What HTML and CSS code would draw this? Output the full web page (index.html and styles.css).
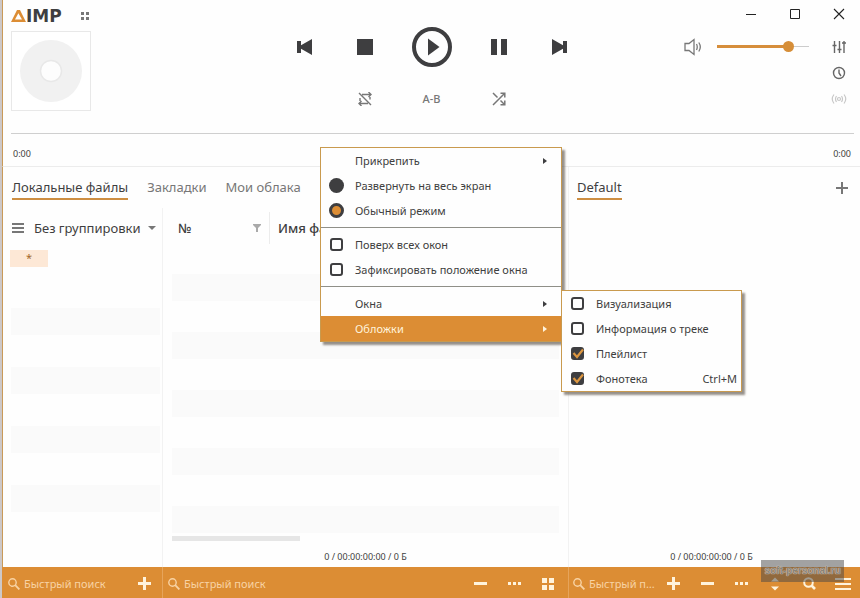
FILE: index.html
```html
<!DOCTYPE html>
<html lang="ru">
<head>
<meta charset="utf-8">
<title>AIMP</title>
<link rel="stylesheet" href="styles.css">
</head>
<body>
<div class="window">
  <header class="player">
    <div class="titlebar">
      <div class="logo">
        <svg width="15" height="12" viewBox="0 0 15 12" aria-hidden="true"><path fill="#dc8d34" fill-rule="evenodd" d="M6 0h3l6 12H0zM7.400 3.200 4 9.600h7z"/></svg>
        <span>IMP</span>
      </div>
      <button class="icon" aria-label="Меню">
        <svg width="8" height="8" viewBox="0 0 8 8" fill="#777"><path d="M0 0h3v3H0zM5 0h3v3H5zM0 5h3v3H0zM5 5h3v3H5z"/></svg>
      </button>
      <div class="window-buttons">
        <button class="icon" aria-label="Свернуть"><svg width="12" height="12"><path d="M1 6.500h10" stroke="#222"/></svg></button>
        <button class="icon" aria-label="Развернуть"><svg width="12" height="12"><path d="M1.500 1.500h9v9h-9z" fill="none" stroke="#222"/></svg></button>
        <button class="icon" aria-label="Закрыть"><svg width="12" height="12"><path d="m1 1 10 10M11 1 1 11" stroke="#222" stroke-width="1.100"/></svg></button>
      </div>
    </div>
    <div class="deck">
      <div class="cover">
        <svg width="62" height="62" viewBox="0 0 62 62"><circle cx="31" cy="31" r="31" fill="#f1f1f1"/><circle cx="31" cy="31" r="10.500" fill="#fdfdfd" stroke="#e8e8e8" stroke-width="1.500"/></svg>
      </div>
      <div class="transport">
        <button class="icon" aria-label="Назад"><svg width="16" height="16" fill="#3e3e40"><path d="M1 2h4v4.200L16 0v16L5 9.800V14H1z"/></svg></button>
        <button class="icon" aria-label="Стоп"><svg width="16" height="16" fill="#3e3e40"><path d="M0 0h16v16H0z"/></svg></button>
        <button class="icon" aria-label="Играть"><svg width="40" height="40"><circle cx="20" cy="20" r="18" fill="none" stroke="#3e3e40" stroke-width="4"/><path d="M16 11.500v17L27.500 20z" fill="#3e3e40"/></svg></button>
        <button class="icon" aria-label="Пауза"><svg width="16" height="16" fill="#3e3e40"><path d="M0 0h6v16H0zM10 0h6v16h-6z"/></svg></button>
        <button class="icon" aria-label="Вперёд"><svg width="16" height="16" fill="#3e3e40"><path d="M15 2h-4v4.200L0 0v16l11-6.200V14h4z"/></svg></button>
        <button class="icon second" aria-label="Повтор"><svg width="14" height="14" fill="none" stroke="#777" stroke-width="1.400"><path d="M4 2.500h9M10.500 0 13 2.500 10.500 5M12 5v2.500M10 11.500H1M3.500 9 1 11.500 3.500 14M2 9V6M1 1l12 12"/></svg></button>
        <button class="icon ab">A-B</button>
        <button class="icon" aria-label="Случайный порядок"><svg width="14" height="14" fill="none" stroke="#777" stroke-width="1.500"><path d="m1 1 4.500 4.500M8.500 8.500 12.500 12.500M1 13 12.500 1.500M8.500 1.200h4.300v4.300M8.500 12.800h4.300V8.500"/></svg></button>
      </div>
      <div class="side">
        <button class="icon speaker" aria-label="Звук"><svg width="18" height="18" fill="none" stroke="#777" stroke-width="1.300"><path d="M1 5.500h4L10 1.500v15L5 12.500H1zM12.500 6q1.500 3 0 6M14.800 4.500q3 4.500 0 9"/></svg></button>
        <input class="volume" type="range" min="0" max="100" value="81" aria-label="Громкость">
        <div class="side-icons">
          <button class="icon" aria-label="Эквалайзер"><svg width="14" height="14" fill="none" stroke="#666" stroke-width="1.400"><path d="M2.500 1v12M7.500 1v12M12 1v12M.5 5.500h4M5.500 9.500h4M10 3h4"/></svg></button>
          <button class="icon" aria-label="Планировщик"><svg width="14" height="14" fill="none" stroke="#666" stroke-width="1.400"><circle cx="7" cy="7" r="5.500"/><path d="M7 3.500V7l2 3"/></svg></button>
          <button class="icon" aria-label="Радио"><svg width="16" height="12" fill="none" stroke="#c8c8c8" stroke-width="1.200"><circle cx="8" cy="6" r="1.500"/><path d="M5.500 3q-2 3 0 6M10.500 3q2 3 0 6M3 1.500q-3.500 4.500 0 9M13 1.500q3.500 4.500 0 9"/></svg></button>
        </div>
      </div>
    </div>
    <input class="seek" type="range" min="0" max="100" value="0" aria-label="Позиция">
    <div class="times"><span>0:00</span><span>0:00</span></div>
  </header>

  <main class="content">
    <section class="library">
      <nav class="tabs">
        <a class="tab active" href="#local">Локальные файлы</a>
        <a class="tab" href="#bookmarks">Закладки</a>
        <a class="tab" href="#cloud">Мои облака</a>
      </nav>
      <div class="panes">
        <div class="groups">
          <button class="group-by">
            <svg width="12" height="11" fill="#777"><path d="M0 0h12v2H0zM0 4h12v2H0zM0 8h12v2H0z"/></svg>
            <span>Без группировки</span>
            <svg width="8" height="4" fill="#777"><path d="M0 0h8L4 4z"/></svg>
          </button>
          <div class="tag">*</div>
          <div class="stripes"><i></i><i></i><i></i><i></i></div>
        </div>
        <div class="files">
          <table class="grid">
            <thead>
              <tr><th class="num"><div>№ <svg width="8" height="8" fill="#aaa"><path d="M0 0h8v1L5 4v4H3V4L0 1z"/></svg></div></th><th class="name"><div>Имя файла</div></th></tr>
            </thead>
            <tbody>
              <tr><td colspan="2"></td></tr><tr><td colspan="2"></td></tr>
              <tr><td colspan="2"></td></tr><tr><td colspan="2"></td></tr>
              <tr><td colspan="2"></td></tr><tr><td colspan="2"></td></tr>
              <tr><td colspan="2"></td></tr><tr><td colspan="2"></td></tr>
              <tr><td colspan="2"></td></tr><tr><td colspan="2"></td></tr>
            </tbody>
          </table>
          <div class="scrollbar"></div>
          <p class="status">0 / 00:00:00:00 / 0 Б</p>
        </div>
      </div>
    </section>
    <section class="playlist">
      <div class="tabs">
        <a class="tab active" href="#default">Default</a>
        <button class="icon add" aria-label="Новый плейлист"><svg width="12" height="12"><path d="M6 0v12M0 6h12" stroke="#777" stroke-width="2"/></svg></button>
      </div>
      <p class="status">0 / 00:00:00:00 / 0 Б</p>
    </section>
  </main>

  <footer class="bar">
    <div class="bar-cell">
      <label class="search"><svg width="12" height="12" fill="none" stroke="#f8d3a4" stroke-width="1.400"><circle cx="4.500" cy="4.500" r="3.700"/><path d="m7.200 7.200 4.200 4.200" stroke-width="1.800"/></svg><input type="text" placeholder="Быстрый поиск" aria-label="Быстрый поиск"></label>
      <button class="icon" aria-label="Добавить"><svg width="13" height="13"><path d="M6.500 0v13M0 6.500h13" stroke="#fff3dc" stroke-width="3"/></svg></button>
    </div>
    <div class="bar-cell">
      <label class="search"><svg width="12" height="12" fill="none" stroke="#f8d3a4" stroke-width="1.400"><circle cx="4.500" cy="4.500" r="3.700"/><path d="m7.200 7.200 4.200 4.200" stroke-width="1.800"/></svg><input type="text" placeholder="Быстрый поиск" aria-label="Быстрый поиск"></label>
      <button class="icon" aria-label="Удалить"><svg width="13" height="13"><path d="M0 6.500h13" stroke="#fff3dc" stroke-width="3"/></svg></button>
      <button class="icon" aria-label="Ещё"><svg width="13" height="13" fill="#fff3dc"><path d="M0 5h3v3H0zM5 5h3v3H5zM10 5h3v3h-3z"/></svg></button>
      <button class="icon" aria-label="Вид"><svg width="12" height="12" fill="#fff3dc"><path d="M0 0h5v5H0zM7 0h5v5H7zM0 7h5v5H0zM7 7h5v5H7z"/></svg></button>
    </div>
    <div class="bar-cell">
      <label class="search"><svg width="12" height="12" fill="none" stroke="#f8d3a4" stroke-width="1.400"><circle cx="4.500" cy="4.500" r="3.700"/><path d="m7.200 7.200 4.200 4.200" stroke-width="1.800"/></svg><input type="text" placeholder="Быстрый поиск" aria-label="Быстрый поиск"></label>
      <button class="icon" aria-label="Добавить"><svg width="13" height="13"><path d="M6.500 0v13M0 6.500h13" stroke="#fff3dc" stroke-width="3"/></svg></button>
      <button class="icon" aria-label="Удалить"><svg width="13" height="13"><path d="M0 6.500h13" stroke="#fff3dc" stroke-width="3"/></svg></button>
      <button class="icon" aria-label="Ещё"><svg width="13" height="13" fill="#fff3dc"><path d="M0 5h3v3H0zM5 5h3v3H5zM10 5h3v3h-3z"/></svg></button>
      <button class="icon" aria-label="Сортировка"><svg width="8" height="14" fill="#fff3dc"><path d="M0 4.500h8L4 .5zM0 9.500h8l-4 4z"/></svg></button>
      <button class="icon" aria-label="Найти"><svg width="13" height="13" fill="none" stroke="#fff3dc" stroke-width="2"><circle cx="5.500" cy="5.500" r="4.300"/><path d="m8.500 8.500 3.500 3.500" stroke-width="2.600"/></svg></button>
      <button class="icon" aria-label="Список"><svg width="16" height="12" fill="#fff3dc"><path d="M0 0h16v2H0zM0 5h16v2H0zM0 10h16v2H0z"/></svg></button>
    </div>
  </footer>

  <div class="menu main-menu">
    <button class="item"><span>Прикрепить</span><svg width="4" height="6"><path d="M0 0v6l4-3z" fill="currentColor"/></svg></button>
    <label class="item"><input type="radio" name="mode"><span>Развернуть на весь экран</span></label>
    <label class="item"><input type="radio" name="mode" checked><span>Обычный режим</span></label>
    <hr>
    <label class="item"><input type="checkbox"><span>Поверх всех окон</span></label>
    <label class="item"><input type="checkbox"><span>Зафиксировать положение окна</span></label>
    <hr>
    <button class="item"><span>Окна</span><svg width="4" height="6"><path d="M0 0v6l4-3z" fill="currentColor"/></svg></button>
    <button class="item selected"><span>Обложки</span><svg width="4" height="6"><path d="M0 0v6l4-3z" fill="currentColor"/></svg></button>
  </div>
  <div class="menu sub-menu">
    <label class="item"><input type="checkbox"><span>Визуализация</span></label>
    <label class="item"><input type="checkbox"><span>Информация о треке</span></label>
    <label class="item"><input type="checkbox" checked><span>Плейлист</span><svg class="tick" width="13" height="13"><path d="m2.500 6 3.500 4 6-7.500" fill="none" stroke="#dc9640" stroke-width="2.200"/></svg></label>
    <label class="item"><input type="checkbox" checked><span>Фонотека</span><svg class="tick" width="13" height="13"><path d="m2.500 6 3.500 4 6-7.500" fill="none" stroke="#dc9640" stroke-width="2.200"/></svg><kbd>Ctrl+M</kbd></label>
  </div>
  <div class="watermark">soft-personal.ru</div>
</div>
</body>
</html>
```
FILE: styles.css
```css
* { box-sizing: border-box; }

body {
  margin: 0;
  font: 11px/16px "Noto Sans", sans-serif;
  color: #3e3e40;
  background: #fefefe;
}

button, input, kbd { font: inherit; color: inherit; }
button { padding: 0; border: 0; background: none; }
input { margin: 0; }
svg { display: block; flex: none; }
p { margin: 0; }
a { color: inherit; text-decoration: none; }

.window {
  position: relative;
  display: flex;
  flex-direction: column;
  min-height: 100vh;
  border-left: 2px solid #cdc8c8;
}

.icon { display: flex; align-items: center; justify-content: center; }

/* Player */
.player { border-left: 1px solid #c99a58; border-bottom: 1px solid #ececec; }
.titlebar { display: flex; align-items: center; height: 27px; padding: 4px 10px 0 8px; }
.logo { display: flex; align-items: center; margin-right: 19px; }
.logo span { font: bold 17px/16px "DejaVu Sans", sans-serif; }
.window-buttons { display: flex; gap: 32px; margin-left: auto; padding: 0 5px 3px 0; }

.deck { display: grid; grid-template-columns: 1fr auto 1fr; align-items: start; }
.cover {
  display: grid;
  place-items: center;
  width: 80px;
  height: 80px;
  margin: 4px 0 0 8px;
  border: 1px solid #e8e8e8;
  background: #fff;
}
.transport {
  display: grid;
  grid-template: 40px 24px / 62px 60px 74px 60px 62px;
  row-gap: 20px;
}
.second { grid-column: 2; }
.ab { font-weight: 500; color: #777; }
.side { display: flex; justify-content: flex-end; align-items: flex-start; padding: 7px 13px 0 0; }
.side .icon { height: 26px; }
.side-icons { width: 16px; margin-left: 22px; }
.side-icons .icon { width: 16px; }
.speaker { margin: 0 15px 0 0; }

.volume {
  appearance: none;
  width: 92px;
  height: 24px;
  background: linear-gradient(90deg, #d68e3b 78%, transparent 78%) center / 100% 3px no-repeat,
    linear-gradient(#ccc, #ccc) center / 100% 1px no-repeat;
}
.volume::-webkit-slider-thumb { appearance: none; width: 11px; height: 11px; border-radius: 50%; background: #d68e38; }
.seek {
  appearance: none;
  display: block;
  width: calc(100% - 14px);
  height: 17px;
  margin: 13px 6px 0 8px;
  background: linear-gradient(#cfcfcf, #cfcfcf) center / 100% 1px no-repeat;
}
.seek::-webkit-slider-thumb { appearance: none; width: 1px; height: 1px; }
.times { display: flex; justify-content: space-between; padding: 4px 9px 4px 10px; font-size: 9px; }

/* Library and playlist */
.content { display: flex; flex: 1; border-left: 1px solid #c99a58; }
.library { display: flex; flex-direction: column; flex: 1; min-width: 0; }
.tabs { display: flex; height: 41px; padding: 0 9px; gap: 19px; font-size: 13px; line-height: 20px; }
.tab { height: 33px; padding-top: 10px; color: #777; }
.tab.active { color: #3e3e40; border-bottom: 2px solid #cd8e42; }
.add { height: 41px; margin-left: auto; padding-right: 3px; }
.panes { display: flex; flex: 1; }

.groups { width: 160px; border-right: 1px solid #f2f2f2; }
.group-by { display: flex; align-items: center; gap: 10px; width: 100%; height: 40px; padding-left: 9px; font-size: 13px; }
.group-by span { margin-right: -2px; white-space: nowrap; }
.tag {
  width: 38px;
  height: 17px;
  margin: 2px 7px 0;
  text-align: center;
  color: #a3682a;
  background: #fde8d6;
}
.stripes { display: grid; gap: 32px; padding: 41px 2px 0 8px; }
.stripes i { height: 27px; background: #fafafa; }

.files { flex: 1; display: flex; flex-direction: column; padding: 0 9px; }
.grid { width: 100%; table-layout: fixed; border-collapse: collapse; }
.grid th { height: 40px; padding: 0; font-size: 13px; font-weight: 500; text-align: left; }
.grid th div { display: flex; align-items: center; justify-content: space-between; height: 32px; padding: 0 8px 0 6px; }
.grid .num { width: 98px; }
.grid .num div { border-right: 1px solid #ececec; }
.grid .name div { padding-left: 8px; }
.grid td { height: 31px; padding: 0; }
.grid tr:first-child td { height: 26px; }
.grid tr:nth-child(even) td { height: 27px; background: #fafafa; }
.scrollbar { width: 128px; height: 5px; margin-top: 3px; background: #e6e6e6; }
.status { margin-top: auto; padding-bottom: 2px; font-size: 9px; text-align: center; }

.playlist { display: flex; flex-direction: column; width: 292px; border-left: 1px solid #f2f2f2; }
.playlist .tabs { padding: 0 9px 0 8px; }
.playlist .status { padding-right: 6px; }

/* Bottom bar */
.bar { display: grid; grid-template-columns: 160px 1fr 292px; height: 31px; color: #f8d3a4; background: #dc8d34; }
.bar-cell { display: flex; align-items: center; min-width: 0; padding: 2px 3px 0 5px; border-left: 1px solid #e6a45b; }
.bar-cell:first-child { border-left-color: transparent; padding-right: 1px; }
.bar-cell:last-child { padding: 2px 0 0 4px; }
.bar .icon { width: 34px; height: 29px; }
.search { display: flex; align-items: center; gap: 4px; flex: 1; min-width: 0; }
.search input { flex: 1; min-width: 0; width: 0; padding: 0; border: 0; background: none; text-overflow: ellipsis; }
.search input::placeholder { color: #f8d3a4; opacity: 1; }

/* Menus */
.menu { position: absolute; border: 1px solid #c99a4e; background: #fefefe; box-shadow: 3px 3px 2px rgba(80, 70, 60, .6); }
.main-menu { left: 318px; top: 147px; width: 242px; }
.sub-menu { left: 559px; top: 290px; width: 181px; }
.menu hr { height: 1px; margin: 4px 0; border: 0; background: #8f8f88; }
.item { position: relative; display: flex; align-items: center; width: 100%; height: 25px; padding: 0 14px 0 8px; }
.item span { flex: 1; text-align: left; white-space: nowrap; }
button.item { padding-left: 34px; }
.sub-menu .item { padding: 0 4px 0 9px; }
.item.selected { color: #fff3dc; background: #dc8d34; }
.item input { appearance: none; flex: none; }
.item input[type="radio"] { width: 15px; height: 15px; margin-right: 11px; border-radius: 50%; background: #3e3e40; }
.item input[type="radio"]:checked { background: #dc8d34; border: 3px solid #3e3e40; }
.item input[type="checkbox"] { width: 13px; height: 13px; margin: 0 12px 0 1px; border: 2px solid #3e3e40; border-radius: 3px; }
.sub-menu .item input[type="checkbox"] { margin-left: 0; }
.item input[type="checkbox"]:checked { background: #3e3e40; }
.tick { position: absolute; left: 9px; top: 6px; }

.watermark {
  position: absolute;
  right: 16px;
  bottom: 16px;
  width: 83px;
  font: bold 10px/22px "Liberation Sans", sans-serif;
  white-space: nowrap;
  text-align: center;
  color: #8a8378;
  text-shadow: 0 0 1px #e0d6c6, 0 0 1px #e0d6c6;
  background: rgba(70, 70, 70, .5);
}
```
